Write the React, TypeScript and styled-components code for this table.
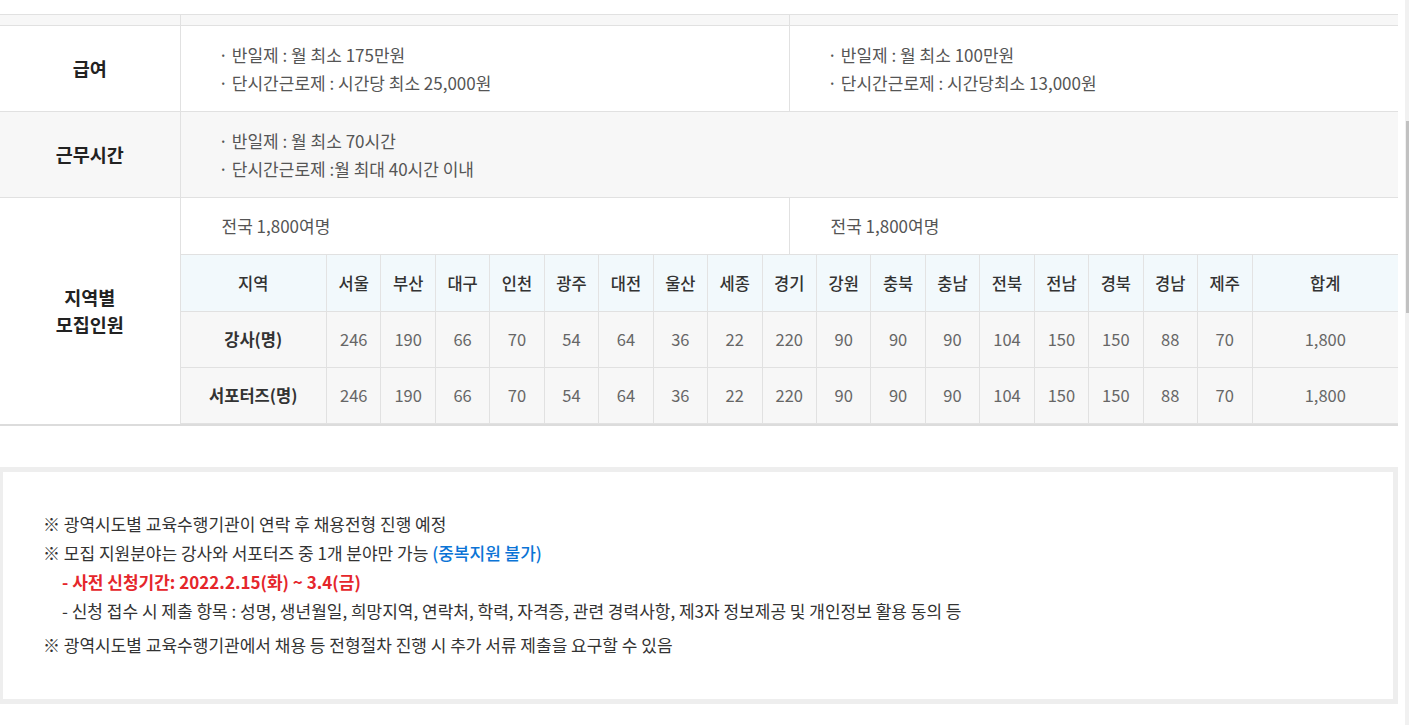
import styled, { createGlobalStyle } from "styled-components";

const GlobalStyle = createGlobalStyle`
  html,
  body {
    margin: 0;
    padding: 0;
    background: #fff;
  }

  body {
    font-family: "Noto Sans CJK KR", "Noto Sans", sans-serif;
    color: #333;
  }

  * {
    box-sizing: border-box;
  }
`;

const REGIONS = [
  "서울",
  "부산",
  "대구",
  "인천",
  "광주",
  "대전",
  "울산",
  "세종",
  "경기",
  "강원",
  "충북",
  "충남",
  "전북",
  "전남",
  "경북",
  "경남",
  "제주",
];

const COUNTS = [246, 190, 66, 70, 54, 64, 36, 22, 220, 90, 90, 90, 104, 150, 150, 88, 70];

const ROWS = ["강사(명)", "서포터즈(명)"];

const Screen = styled.div`
  display: flex;
  height: 725px;
  overflow: hidden;
`;

const Content = styled.div`
  width: 1398px;
  flex-shrink: 0;
  padding-top: 14px;
`;

const ScrollTrack = styled.div`
  margin-left: 7px;
  width: 4px;
  background: #f1f1f1;
  display: flex;
  justify-content: flex-end;
`;

const ScrollThumb = styled.div`
  margin-top: 121px;
  width: 3px;
  height: 192px;
  background: #c1c1c1;
`;

const InfoTable = styled.table`
  width: 100%;
  border-collapse: collapse;
  table-layout: fixed;
  border-top: 1px solid #e1e1e1;
  border-bottom: 2px solid #dcdcdc;
`;

const Row = styled.tr<{ $shade?: boolean }>`
  background: ${(p) => (p.$shade ? "#f7f7f7" : "#fff")};
`;

const Label = styled.th<{ $h?: number }>`
  height: ${(p) => p.$h ?? 86}px;
  padding: 0;
  border-bottom: 1px solid #e1e1e1;
  border-right: 1px solid #e1e1e1;
  font-size: 18.5px;
  font-weight: 700;
  line-height: 27px;
  color: #222;
  text-align: center;
  vertical-align: middle;
`;

const Cell = styled.td<{ $h?: number; $pad?: number }>`
  height: ${(p) => p.$h ?? 86}px;
  padding: 0 0 0 ${(p) => p.$pad ?? 38}px;
  border-bottom: 1px solid #e1e1e1;
  border-left: 1px solid #e1e1e1;
  font-size: 17px;
  line-height: 28px;
  color: #555;
  vertical-align: middle;
`;

const NestCell = styled.td`
  padding: 0;
  border-left: 1px solid #e1e1e1;
`;

const Line = styled.div`
  white-space: nowrap;
`;

const RegionTable = styled.table`
  width: 100%;
  border-collapse: collapse;
  table-layout: fixed;
`;

const RegionRow = styled.tr<{ $head?: boolean }>`
  background: ${(p) => (p.$head ? "#f2f9fc" : "#f7f7f7")};
`;

const RegionHead = styled.th`
  height: 56px;
  padding: 0;
  border-right: 1px solid #e3e3e3;
  border-bottom: 1px solid #e1e1e1;
  font-size: 16.5px;
  font-weight: 500;
  color: #333;
  text-align: center;

  &:last-child {
    border-right: 0;
  }
`;

const RowHead = styled.th`
  height: 56px;
  padding: 0;
  border-right: 1px solid #e1e1e1;
  border-bottom: 1px solid #e1e1e1;
  font-size: 16.5px;
  font-weight: 700;
  color: #333;
  text-align: center;
`;

const Num = styled.td`
  height: 56px;
  padding: 0;
  border-right: 1px solid #e1e1e1;
  border-bottom: 1px solid #e1e1e1;
  font-size: 16.5px;
  color: #666;
  text-align: center;

  &:last-child {
    border-right: 0;
  }
`;

const NoticeBox = styled.div`
  margin-top: 41px;
  border: 5px solid #eeeeee;
  border-left-width: 3px;
  padding: 37px 40px 40px 40px;
  font-size: 17px;
  line-height: 29px;
  color: #333;
`;

const Note = styled.p<{ $gap?: boolean }>`
  margin: ${(p) => (p.$gap ? "5px" : "0")} 0 0;
  white-space: nowrap;
`;

const SubNote = styled.p<{ $alert?: boolean }>`
  margin: 0;
  padding-left: 19px;
  white-space: nowrap;
  color: ${(p) => (p.$alert ? "#e5262b" : "#333")};
  font-weight: ${(p) => (p.$alert ? 700 : 400)};
`;

const Blue = styled.span`
  color: #0b74d6;
  font-weight: 500;
`;

export default function App() {
  return (
    <Screen>
      <GlobalStyle />
      <Content>
        <InfoTable>
          <colgroup>
            <col style={{ width: 180 }} />
            <col />
            <col />
          </colgroup>
          <tbody>
            <Row $shade>
              <Label $h={11} />
              <Cell $h={11} />
              <Cell $h={11} />
            </Row>
            <Row>
              <Label>급여</Label>
              <Cell>
                <Line>· 반일제 : 월 최소 175만원</Line>
                <Line>· 단시간근로제 : 시간당 최소 25,000원</Line>
              </Cell>
              <Cell>
                <Line>· 반일제 : 월 최소 100만원</Line>
                <Line>· 단시간근로제 : 시간당최소 13,000원</Line>
              </Cell>
            </Row>
            <Row $shade>
              <Label>근무시간</Label>
              <Cell colSpan={2}>
                <Line>· 반일제 : 월 최소 70시간</Line>
                <Line>· 단시간근로제 :월 최대 40시간 이내</Line>
              </Cell>
            </Row>
            <Row>
              <Label rowSpan={2}>
                지역별
                <br />
                모집인원
              </Label>
              <Cell $h={57} $pad={41}>
                전국 1,800여명
              </Cell>
              <Cell $h={57} $pad={41}>
                전국 1,800여명
              </Cell>
            </Row>
            <Row>
              <NestCell colSpan={2}>
                <RegionTable>
                  <colgroup>
                    <col style={{ width: 146 }} />
                    {REGIONS.map((r) => (
                      <col key={r} />
                    ))}
                    <col style={{ width: 146 }} />
                  </colgroup>
                  <tbody>
                    <RegionRow $head>
                      <RegionHead>지역</RegionHead>
                      {REGIONS.map((r) => (
                        <RegionHead key={r}>{r}</RegionHead>
                      ))}
                      <RegionHead>합계</RegionHead>
                    </RegionRow>
                    {ROWS.map((name) => (
                      <RegionRow key={name}>
                        <RowHead>{name}</RowHead>
                        {COUNTS.map((n, i) => (
                          <Num key={REGIONS[i]}>{n}</Num>
                        ))}
                        <Num>1,800</Num>
                      </RegionRow>
                    ))}
                  </tbody>
                </RegionTable>
              </NestCell>
            </Row>
          </tbody>
        </InfoTable>

        <NoticeBox>
          <Note>※ 광역시도별 교육수행기관이 연락 후 채용전형 진행 예정</Note>
          <Note>
            ※ 모집 지원분야는 강사와 서포터즈 중 1개 분야만 가능 <Blue>(중복지원 불가)</Blue>
          </Note>
          <SubNote $alert>- 사전 신청기간: 2022.2.15(화) ~ 3.4(금)</SubNote>
          <SubNote>
            - 신청 접수 시 제출 항목 : 성명, 생년월일, 희망지역, 연락처, 학력, 자격증, 관련 경력사항, 제3자
            정보제공 및 개인정보 활용 동의 등
          </SubNote>
          <Note $gap>※ 광역시도별 교육수행기관에서 채용 등 전형절차 진행 시 추가 서류 제출을 요구할 수 있음</Note>
        </NoticeBox>
      </Content>
      <ScrollTrack>
        <ScrollThumb />
      </ScrollTrack>
    </Screen>
  );
}
